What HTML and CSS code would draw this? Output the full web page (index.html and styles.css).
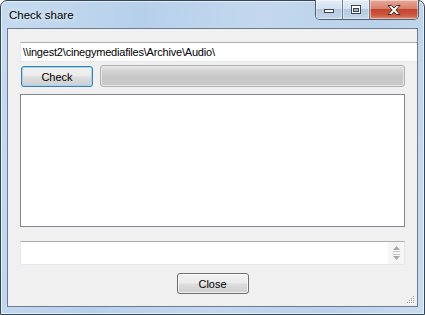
FILE: index.html
```html
<!DOCTYPE html>
<html lang="en">
<head>
    <meta charset="UTF-8">
    <title>Check share</title>
    <link rel="stylesheet" href="styles.css">
</head>
<body>
    <div class="window">
        <div class="titlebar">
            <span class="title">Check share</span>
            <div class="caption-btns">
                <div class="cap-btn cap-min">
                    <svg width="14" height="8" viewBox="0 0 14 8"><rect x="2.5" y="3.5" width="9" height="3" fill="#fff" stroke="#3b4656"/></svg>
                </div>
                <div class="cap-btn cap-max">
                    <svg width="14" height="11" viewBox="0 0 14 11"><rect x="2.5" y="1.5" width="9" height="8" fill="#fff" stroke="#3b4656"/><rect x="4.5" y="4.5" width="5" height="3" fill="#9fb2c8" stroke="#3b4656"/></svg>
                </div>
                <div class="cap-btn cap-close">
                    <svg width="18" height="12" viewBox="0 0 18 12"><path d="M3 1.5h3.5l2.5 2.6 2.5-2.6H15l-4.2 4.5 4.2 4.5h-3.5L9 7.9l-2.5 2.6H3l4.2-4.5z" fill="#fff" stroke="#4a2a24" stroke-width="1"/></svg>
                </div>
            </div>
        </div>
        <div class="client">
            <div class="path-box">\\ingest2\cinegymediafiles\Archive\Audio\</div>
            <div class="check-row">
                <button class="btn btn-default">Check</button>
                <div class="progress"></div>
            </div>
            <div class="listbox"></div>
            <div class="log-box">
                <div class="log-scroll">
                    <svg width="9" height="20" viewBox="0 0 9 20"><path d="M4.5 3L1 7h7z" fill="#a8a8a8"/><path d="M4.5 17L1 13h7z" fill="#a8a8a8"/><path d="M1 8.5h7M1 11.5h7" stroke="#c8c8c8"/></svg>
                </div>
            </div>
            <div class="footer">
                <button class="btn">Close</button>
            </div>
            <svg class="grip" width="8" height="8" viewBox="0 0 8 8">
                <g fill="#9a9a9a"><rect x="6" y="0" width="1" height="1"/><rect x="4" y="2" width="1" height="1"/><rect x="6" y="2" width="1" height="1"/><rect x="2" y="4" width="1" height="1"/><rect x="4" y="4" width="1" height="1"/><rect x="6" y="4" width="1" height="1"/><rect x="0" y="6" width="1" height="1"/><rect x="2" y="6" width="1" height="1"/><rect x="4" y="6" width="1" height="1"/><rect x="6" y="6" width="1" height="1"/></g>
                <g fill="#fff"><rect x="7" y="1" width="1" height="1"/><rect x="5" y="3" width="1" height="1"/><rect x="7" y="3" width="1" height="1"/><rect x="3" y="5" width="1" height="1"/><rect x="5" y="5" width="1" height="1"/><rect x="7" y="5" width="1" height="1"/><rect x="1" y="7" width="1" height="1"/><rect x="3" y="7" width="1" height="1"/><rect x="5" y="7" width="1" height="1"/><rect x="7" y="7" width="1" height="1"/></g>
            </svg>
        </div>
    </div>
</body>
</html>
```

FILE: styles.css
```css
body {
    margin: 0;
    background: #fff;
    font-family: "Liberation Sans", Arial, sans-serif;
}
.window {
    box-sizing: border-box;
    width: 425px;
    height: 315px;
    border: 1px solid #34465a;
    border-radius: 7px 7px 0 0;
    background: linear-gradient(100deg, #c6dbf0 0%, #b7d0ea 30%, #c3d8ee 55%, #b9d1ea 80%, #c8dcf0 100%);
    padding: 0 6px 7px 6px;
    display: flex;
    flex-direction: column;
    box-shadow: inset 0 0 0 1px rgba(255, 255, 255, 0.6);
}
.titlebar {
    height: 27px;
    display: flex;
    align-items: flex-start;
    flex-shrink: 0;
}
.title {
    font-size: 11.5px;
    color: #000;
    margin: 8px 0 0 2px;
    text-shadow: 0 0 6px rgba(255, 255, 255, 0.9);
}
.caption-btns {
    margin-left: auto;
    margin-right: -1px;
    margin-top: -1px;
    display: flex;
    height: 19px;
    border: 1px solid #4f5f72;
    border-top: none;
    border-radius: 0 0 5px 5px;
    overflow: hidden;
}
.cap-btn {
    display: flex;
    align-items: center;
    justify-content: center;
    box-shadow: inset 0 0 0 1px rgba(255, 255, 255, 0.45);
}
.cap-min, .cap-max {
    width: 26px;
    background: linear-gradient(#e6eef8 0%, #d3e0ef 45%, #b6c8dd 50%, #c5d6ea 100%);
    border-right: 1px solid #6f7f93;
}
.cap-close {
    width: 48px;
    background: linear-gradient(#e9a898 0%, #d8806b 45%, #c4432b 50%, #cc5a40 80%, #e08a70 100%);
}
.client {
    flex: 1;
    position: relative;
    overflow: hidden;
    background: #f0f0f0;
    border: 1px solid #6d7c8e;
    padding: 13px 12px 0 12px;
    display: flex;
    flex-direction: column;
    font-size: 11px;
}
.path-box {
    box-sizing: border-box;
    height: 20px;
    width: 420px;
    background: #fff;
    border: 1px solid #e3e9ef;
    border-top-color: #abadb3;
    padding: 3px 0 0 2px;
    white-space: nowrap;
    letter-spacing: -0.2px;
    color: #000;
    flex-shrink: 0;
}
.check-row {
    display: flex;
    margin-top: 3px;
    height: 22px;
    flex-shrink: 0;
}
.btn {
    box-sizing: border-box;
    width: 72px;
    height: 21px;
    padding: 0;
    font-family: "Liberation Sans", Arial, sans-serif;
    font-size: 11px;
    color: #000;
    border: 1px solid #707070;
    border-radius: 3px;
    background: linear-gradient(#f2f2f2 0%, #ebebeb 48%, #dddddd 52%, #cfcfcf 100%);
    box-shadow: inset 0 0 0 1px rgba(255, 255, 255, 0.7);
}
.btn-default {
    margin: 1px 0 0 1px;
    border-color: #3c7fb1;
    box-shadow: inset 0 0 0 1px #9fd5f5;
}
.progress {
    box-sizing: border-box;
    margin-left: 7px;
    width: 305px;
    height: 22px;
    border: 1px solid #b2b2b2;
    border-radius: 3px;
    background: linear-gradient(#e8e8e8 0%, #d0d0d0 30%, #c6c6c6 60%, #cbcbcb 100%);
    box-shadow: inset 0 0 0 1px #e6e6e6;
}
.listbox {
    box-sizing: border-box;
    margin-top: 7px;
    height: 133px;
    background: #fff;
    border: 1px solid #828790;
    flex-shrink: 0;
}
.log-box {
    box-sizing: border-box;
    margin-top: 14px;
    height: 24px;
    background: #fff;
    border: 1px solid #e3e9ef;
    border-top-color: #abadb3;
    display: flex;
    justify-content: flex-end;
    flex-shrink: 0;
}
.log-scroll {
    width: 16px;
    display: flex;
    align-items: center;
    justify-content: center;
    background: #f6f6f6;
}
.footer {
    display: flex;
    justify-content: center;
    margin-top: 8px;
}
.grip {
    position: absolute;
    right: 2px;
    bottom: 2px;
}
```
